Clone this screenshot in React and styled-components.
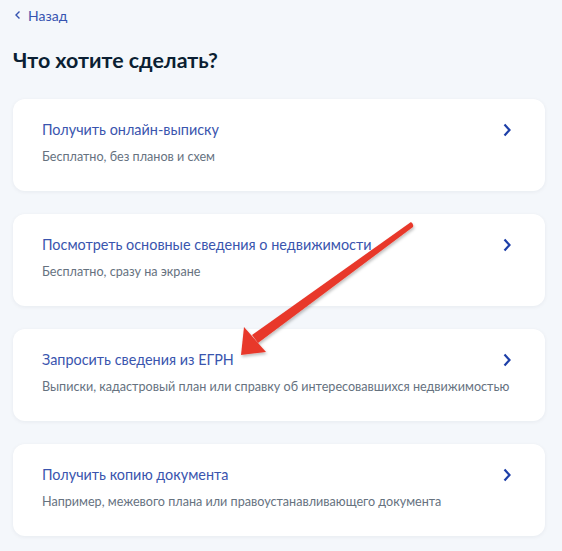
import React from "react";
import styled, { createGlobalStyle } from "styled-components";

const GlobalStyle = createGlobalStyle`
  html, body {
    margin: 0;
    padding: 0;
    background: #f4f7fb;
    font-family: Lato, "Noto Sans", sans-serif;
  }
`;

const Page = styled.div`
  position: relative;
  width: 562px;
  height: 551px;
  overflow: hidden;
  padding: 0 17px 0 13px;
  box-sizing: border-box;
`;

const BackLink = styled.a`
  display: flex;
  align-items: center;
  gap: 6px;
  padding-top: 6px;
  height: 18px;
  color: #3553b0;
  font-size: 14px;
  text-decoration: none;
  margin-left: 1px;
`;

const Heading = styled.h1`
  margin: 23px 0 25px;
  font-size: 21.4px;
  font-weight: 700;
  color: #0b1f33;
  line-height: 27px;
`;

const List = styled.div`
  display: flex;
  flex-direction: column;
  gap: 23px;
`;

const Card = styled.div`
  display: flex;
  align-items: flex-start;
  justify-content: space-between;
  background: #fff;
  border-radius: 12px;
  box-shadow: 0 1px 4px rgba(11, 31, 51, 0.06);
  padding: 21px 33px 24px 29px;
  height: 92px;
  box-sizing: border-box;
`;

const Texts = styled.div`
  display: flex;
  flex-direction: column;
  gap: 9px;
  flex: 1;
  min-width: 0;
`;

const Title = styled.div`
  font-size: 14.4px;
  line-height: 20px;
  color: #3a55ae;
  white-space: nowrap;
`;

const Sub = styled.div`
  font-size: 12.6px;
  line-height: 16px;
  color: #66727f;
  white-space: nowrap;
`;

const Chevron = styled.svg`
  margin-top: 3px;
  flex: none;
`;

const Arrow = styled.svg`
  position: absolute;
  left: 0;
  top: 0;
  pointer-events: none;
`;

const items = [
  ["Получить онлайн-выписку", "Бесплатно, без планов и схем"],
  ["Посмотреть основные сведения о недвижимости", "Бесплатно, сразу на экране"],
  ["Запросить сведения из ЕГРН", "Выписки, кадастровый план или справку об интересовавшихся недвижимостью"],
  ["Получить копию документа", "Например, межевого плана или правоустанавливающего документа"],
];

export default function App() {
  return (
    <Page>
      <GlobalStyle />
      <BackLink href="#">
        <svg width="8" height="10" viewBox="0 0 8 10">
          <path d="M5.5 1.5 L2 5 L5.5 8.5" fill="none" stroke="#3553b0" strokeWidth="1.4" />
        </svg>
        Назад
      </BackLink>
      <Heading>Что хотите сделать?</Heading>
      <List>
        {items.map(([t, s]) => (
          <Card key={t}>
            <Texts>
              <Title>{t}</Title>
              <Sub>{s}</Sub>
            </Texts>
            <Chevron width="10" height="14" viewBox="0 0 10 14">
              <path d="M2.5 1.5 L7.5 7 L2.5 12.5" fill="none" stroke="#1d3fa8" strokeWidth="2.2" />
            </Chevron>
          </Card>
        ))}
      </List>
      <Arrow width="562" height="551" viewBox="0 0 562 551">
        <defs>
          <filter id="sh" x="-10%" y="-10%" width="120%" height="120%">
            <feDropShadow dx="1" dy="2" stdDeviation="1.5" floodColor="#000" floodOpacity="0.25" />
          </filter>
        </defs>
        <g filter="url(#sh)" fill="#e8392c">
          <path d="M411 222 Q414 224 413 227 L258 343 L252 335 Z" />
          <path d="M244 327 L241 355 L266 352 Z" />
        </g>
      </Arrow>
    </Page>
  );
}
